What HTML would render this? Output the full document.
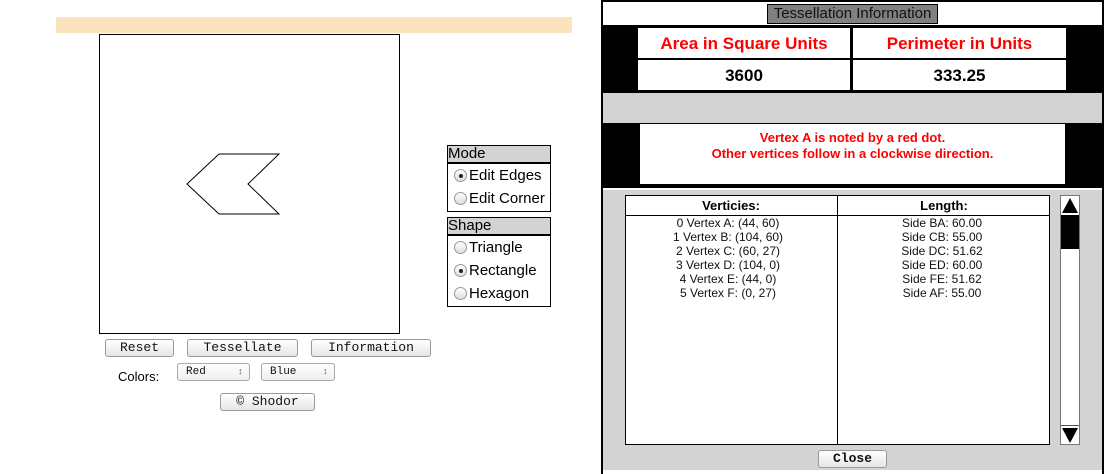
<!DOCTYPE html>
<html><head><style>
*{margin:0;padding:0;box-sizing:border-box}
body{width:1107px;height:474px;background:#fff;position:relative;overflow:hidden;font-family:"Liberation Sans",Arial,sans-serif}
.a{position:absolute}
.btn{position:absolute;border:1px solid #999;border-radius:3px;background:linear-gradient(#fff,#e6e6e6);font-family:"Liberation Mono",monospace;font-size:13px;text-align:center;line-height:16px;color:#111}
.sel{position:absolute;border:1px solid #aaa;border-radius:3px;background:linear-gradient(#fff,#eee);font-family:"Liberation Mono",monospace;font-size:11px;line-height:16px;padding-left:8px;color:#111}
.sel:after{content:"\2195";position:absolute;right:6px;top:0;font-size:9px;color:#555}
.box{position:absolute;border:1px solid #000;background:#fff}
.hd{background:#d3d3d3;border-bottom:2px solid #000;font-size:15px;line-height:16px;height:18px}
.opt{font-size:15px;height:23px;line-height:23px;padding-left:6px;display:flex;align-items:center}
.r{width:13px;height:13px;border-radius:50%;border:1px solid #999;background:linear-gradient(#fff,#ddd);margin-right:2px;position:relative}
.r.on:after{content:"";position:absolute;left:4px;top:4px;width:4px;height:4px;border-radius:50%;background:#222}
.cell{position:absolute;background:#fff;font-weight:bold;font-size:17px;text-align:center}
.list{font-size:12px;line-height:14px;text-align:center;color:#111}
</style></head><body>
<div class="a" style="left:56px;top:17px;width:516px;height:16px;background:#fbe3bd"></div>
<div class="box" style="left:99px;top:34px;width:301px;height:300px"></div>
<svg class="a" style="left:0;top:0" width="600" height="474"><polygon points="187,184 219,154 279,154 248,184 279,214 219,214" fill="none" stroke="#000" stroke-width="1"/></svg>

<div class="box" style="left:447px;top:145px;width:104px;height:67px">
<div class="hd">Mode</div>
<div class="opt" style="height:23px"><span class="r on"></span>Edit Edges</div>
<div class="opt" style="height:23px"><span class="r"></span>Edit Corner</div>
</div>
<div class="box" style="left:447px;top:217px;width:104px;height:90px">
<div class="hd">Shape</div>
<div class="opt"><span class="r"></span>Triangle</div>
<div class="opt"><span class="r on"></span>Rectangle</div>
<div class="opt"><span class="r"></span>Hexagon</div>
</div>

<div class="btn" style="left:105px;top:339px;width:69px;height:18px">Reset</div>
<div class="btn" style="left:187px;top:339px;width:111px;height:18px">Tessellate</div>
<div class="btn" style="left:311px;top:339px;width:120px;height:18px">Information</div>
<div class="a" style="left:118px;top:369px;font-size:13px">Colors:</div>
<div class="sel" style="left:177px;top:363px;width:73px;height:18px">Red</div>
<div class="sel" style="left:261px;top:363px;width:74px;height:18px">Blue</div>
<div class="btn" style="left:220px;top:393px;width:95px;height:18px">© Shodor</div>

<!-- right panel -->
<div class="a" style="left:601px;top:0;width:503px;height:474px;border:2px solid #000;border-bottom:none;background:#fff"></div>
<div class="a" style="left:603px;top:0;width:499px;height:2px;background:#000"></div>
<div class="a" style="left:767px;top:4px;width:171px;height:20px;background:#808080;border:1px solid #000;font-size:15px;text-align:center;line-height:18px;color:#111">Tessellation Information</div>
<div class="a" style="left:603px;top:25px;width:499px;height:70px;background:#000"></div>
<div class="cell" style="left:638px;top:28px;width:212px;height:30px;line-height:31px;color:#f00">Area in Square Units</div>
<div class="cell" style="left:853px;top:28px;width:213px;height:30px;line-height:31px;color:#f00">Perimeter in Units</div>
<div class="cell" style="left:638px;top:60px;width:212px;height:30px;line-height:31px">3600</div>
<div class="cell" style="left:853px;top:60px;width:213px;height:30px;line-height:31px">333.25</div>
<div class="a" style="left:603px;top:93px;width:499px;height:30px;background:#d3d3d3"></div>
<div class="a" style="left:603px;top:123px;width:499px;height:65px;background:#000"></div>
<div class="a" style="left:640px;top:124px;width:425px;height:60px;background:#fff;color:#f00;font-weight:bold;font-size:13px;text-align:center;line-height:16px;padding-top:6px">Vertex A is noted by a red dot.<br>Other vertices follow in a clockwise direction.</div>
<div class="a" style="left:603px;top:190px;width:499px;height:280px;background:#d3d3d3"></div>
<div class="a" style="left:625px;top:195px;width:425px;height:250px;background:#fff;border:1px solid #000"></div>
<div class="a" style="left:837px;top:195px;width:1px;height:250px;background:#000"></div>
<div class="a" style="left:625px;top:215px;width:425px;height:1px;background:#000"></div>
<div class="a" style="left:625px;top:198px;width:212px;text-align:center;font-weight:bold;font-size:13px">Verticies:</div>
<div class="a" style="left:838px;top:198px;width:212px;text-align:center;font-weight:bold;font-size:13px">Length:</div>
<div class="a list" style="left:622px;top:216px;width:212px">0 Vertex A: (44, 60)<br>1 Vertex B: (104, 60)<br>2 Vertex C: (60, 27)<br>3 Vertex D: (104, 0)<br>4 Vertex E: (44, 0)<br>5 Vertex F: (0, 27)</div>
<div class="a list" style="left:836px;top:216px;width:212px">Side BA: 60.00<br>Side CB: 55.00<br>Side DC: 51.62<br>Side ED: 60.00<br>Side FE: 51.62<br>Side AF: 55.00</div>
<div class="a" style="left:1060px;top:195px;width:20px;height:250px;background:#fff;border:1px solid #777"></div>
<svg class="a" style="left:1060px;top:195px" width="20" height="250">
<polygon points="2,18 10,3 18,18" fill="#000"/>
<rect x="1" y="20" width="18" height="34" fill="#000"/>
<rect x="1" y="230" width="18" height="1" fill="#555"/>
<polygon points="2,233 18,233 10,248" fill="#000"/>
</svg>
<div class="btn" style="left:818px;top:450px;width:69px;height:18px;font-weight:bold">Close</div>
</body></html>
